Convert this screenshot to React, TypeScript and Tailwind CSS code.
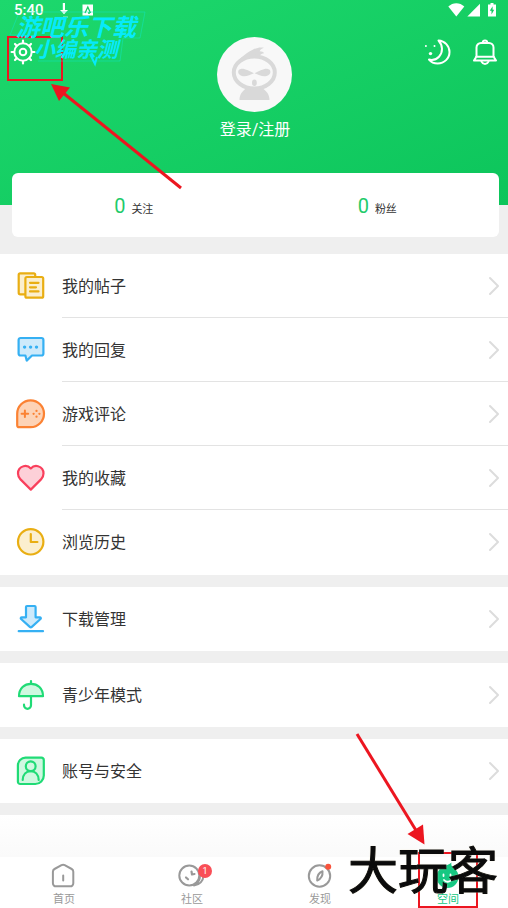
import type { ReactNode } from "react";

const stroke = {
  fill: "none",
  strokeLinecap: "round" as const,
  strokeLinejoin: "round" as const,
};

function RowIcon({ children, color, tint }: { children: ReactNode; color: string; tint: string }) {
  return (
    <svg viewBox="0 0 32 32" className="size-8 shrink-0" {...stroke} stroke={color} fill={tint} strokeWidth="2.200" aria-hidden="true">
      {children}
    </svg>
  );
}

function PostsIcon() {
  return (
    <RowIcon color="#e9ae13" tint="#fbefcf">
      <rect x="3.7" y="3.3" width="16.5" height="21" rx="1.5" />
      <rect x="10.4" y="7" width="17.8" height="20.7" rx="1.5" />
      <path d="M15 12.8h8.5M15 17.3h6M15 21.4h8.5" fill="none" />
    </RowIcon>
  );
}

function ReplyIcon() {
  return (
    <RowIcon color="#35b0f3" tint="#cdeafb">
      <path d="M5.6 4h20.8a2 2 0 0 1 2 2v13.5a2 2 0 0 1-2 2H17L11.7 26.6 10.4 21.5H5.6a2 2 0 0 1-2-2V6a2 2 0 0 1 2-2z" />
      <path d="M9.6 13.1h.01M15.6 13.1h.01M21.5 13.1h.01" strokeWidth="3.4" />
    </RowIcon>
  );
}

function GameIcon() {
  return (
    <RowIcon color="#fb8233" tint="#fdd3b6">
      <path d="M15.6 2.4A13.4 13.4 0 1 1 15.6 29.2H4.2a2 2 0 0 1-2-2V15.8A13.4 13.4 0 0 1 15.6 2.4z" />
      <path d="M6.6 15.8h6.6M9.9 12.5v6.6" strokeWidth="2" />
      <path d="M21.5 12.9h.01M21.5 18.7h.01M18.6 15.8h.01M24.4 15.8h.01" strokeWidth="2.3" />
    </RowIcon>
  );
}

function HeartIcon() {
  return (
    <RowIcon color="#f93f5c" tint="#fdd0d8">
      <path d="M15.8 6.4C18 4 20.6 3.6 23 4.2c3 .8 5.5 3.300 5.500 7.200 0 2.500-.9 4.300-2.500 6L15.8 27.600 5.500 17.400C3.900 15.700 3 13.900 3 11.400 3 7.500 5.500 5 8.500 4.200c2.400-.6 5.100-.2 7.300 2.200z" />
    </RowIcon>
  );
}

function ClockIcon() {
  return (
    <RowIcon color="#e9ae13" tint="#fbefcf">
      <circle cx="15.7" cy="15.8" r="12.700" />
      <path d="M15.800 8v8h6.600" fill="none" />
    </RowIcon>
  );
}

function DownloadIcon() {
  return (
    <RowIcon color="#35b0f3" tint="#cdeafb">
      <path d="M12 3h7.600a1 1 0 0 1 1 1v10.300h4.200c1 0 1.400 1 .7 1.700L16.800 23.900a1.500 1.500 0 0 1-2 0L6.100 16c-.7-.7-.3-1.700.7-1.700H11V4a1 1 0 0 1 1-1z" />
      <path d="M3.700 28.200h24.300" />
    </RowIcon>
  );
}

function UmbrellaIcon() {
  return (
    <RowIcon color="#20db76" tint="#cff8e0">
      <path d="M16 16v10.300a3.500 3.500 0 0 1-7 0v-.6M16 2v2" fill="none" />
      <path d="M4 17.200C4 9 9.500 4.800 16 4.800s12 4.200 12 12.400z" />
    </RowIcon>
  );
}

function AccountIcon() {
  return (
    <RowIcon color="#20db76" tint="#cff8e0">
      <path d="M10.500 2.700H26.500a2.300 2.300 0 0 1 2.300 2.300V20.500a8.500 8.500 0 0 1-8.500 8.500H5.200A2.300 2.300 0 0 1 2.900 26.700V10.500a7.700 7.700 0 0 1 7.600-7.800z" />
      <circle cx="15.700" cy="11.300" r="4.900" />
      <path d="M7.700 25c.2-5.500 3.500-8.800 8-8.800s7.800 3.300 8 8.800" fill="none" />
    </RowIcon>
  );
}

const groups: { label: string; icon: ReactNode }[][] = [
  [
    { label: "我的帖子", icon: <PostsIcon /> },
    { label: "我的回复", icon: <ReplyIcon /> },
    { label: "游戏评论", icon: <GameIcon /> },
    { label: "我的收藏", icon: <HeartIcon /> },
    { label: "浏览历史", icon: <ClockIcon /> },
  ],
  [{ label: "下载管理", icon: <DownloadIcon /> }],
  [{ label: "青少年模式", icon: <UmbrellaIcon /> }],
  [{ label: "账号与安全", icon: <AccountIcon /> }],
];

function StatusBar() {
  return (
    <div className="flex h-5 items-center justify-between pr-3 pl-[14px] text-white">
      <div className="flex items-center">
        <span className="w-11 text-[15px] leading-5 font-medium">5:40</span>
        <svg viewBox="0 0 12 16" className="h-4 w-3" fill="#fff" aria-hidden="true">
          <path d="M4.800 1h2.200v7h3L6 12.200 2 8h2.800z" />
          <path d="M5 14.500h5v1.200h-5z" opacity=".6" />
        </svg>
        <svg viewBox="0 0 12 12" className="ml-3 size-3" aria-hidden="true">
          <rect x=".5" y=".5" width="10.500" height="11" fill="#fff" />
          <path d="M3 9L5.800 3l2.700 6M6 9h2" fill="none" stroke="#14ce63" strokeWidth="1.300" />
        </svg>
      </div>
      <svg viewBox="0 0 48 16" className="h-4 w-12" fill="#fff" aria-hidden="true">
        <path d="M.3 4.600C4.800 0 11.800 0 16.300 4.600L8.300 14.500z" />
        <path d="M19.300 14.500L32 1.800v12.700z" />
        <path d="M42.500 1h3v1.400H48v12.100h-8V2.400h2.500z" />
        <path d="M44.600 4.200l-2.800 4.600h1.700v3.800l2.700-4.900h-1.600z" fill="#10cc61" />
      </svg>
    </div>
  );
}

function GearIcon() {
  return (
    <svg viewBox="0 0 26 26" className="size-[26px]" {...stroke} stroke="#fff" strokeWidth="2" aria-hidden="true">
      <circle cx="13" cy="13" r="8.700" />
      <circle cx="13" cy="13" r="3.300" />
      <path strokeWidth="2.200" d="M13 4V1.600M13 22v2.400M4 13H1.600M22 13h2.400M6.700 6.700L5 5M19.300 6.700L21 5M6.700 19.300L5 21M19.300 19.300L21 21" />
    </svg>
  );
}

function MoonIcon() {
  return (
    <svg viewBox="0 0 28 28" className="size-7" {...stroke} stroke="#fff" strokeWidth="2" aria-hidden="true">
      <path d="M14.500 2.500C20.800 2.900 25.500 7.800 25.500 14c0 6.400-5.200 11.500-11.800 11.500-3.700 0-6.800-1.500-8.700-3.900 3.700.8 7.500-.2 10-2.900 4.300-4.600 3.800-11.500-.5-16.200z" />
      <path d="M1.900 8.100h.01M10.500 8.100h.01" strokeWidth="2" />
      <path d="M6.500 15.600h.01" strokeWidth="3.400" />
    </svg>
  );
}

function BellIcon() {
  return (
    <svg viewBox="0 0 26 28" className="h-7 w-[26px]" {...stroke} stroke="#fff" strokeWidth="2" aria-hidden="true">
      <path d="M10.800 4.700a2.200 2.200 0 0 1 4.400 0" />
      <path d="M4.500 18.500V9.500a4.500 4.500 0 0 1 4.500-4.500h8a4.500 4.500 0 0 1 4.500 4.500v9M4 18.700h18M4.500 18.500L2 22.600h22l-2.500-4.100" />
      <path d="M9.500 23.600c.7 1.500 2 2.300 3.500 2.300s2.800-.8 3.500-2.300" />
    </svg>
  );
}

function Avatar() {
  return (
    <svg viewBox="0 0 75 75" className="size-[75px]" aria-hidden="true">
      <circle cx="37.500" cy="37.500" r="37.500" fill="#f8f8f8" />
      <path d="M20 25C24 20 31 15 37 12c4-1.600 7-2 10-1.200-2.500.8-4 2-4.300 3.400 2 0 4 .8 4.500 2-2 0-3.500 1-5.200 3z" fill="#d9d9d9" />
      <ellipse cx="37.300" cy="35.500" rx="20.500" ry="16" fill="#f8f8f8" stroke="#d9d9d9" strokeWidth="4" />
      <path d="M37 36.300C33 34.500 28 31.500 24.500 31.800c-4.500.5-4.500 6 .5 7.200 4 .8 8-.8 12-2.700zM37.600 36.300c4-1.800 9-4.800 12.500-4.500 4.500.5 4.500 6-.5 7.200-4 .8-8-.8-12-2.700z" fill="#d9d9d9" />
      <ellipse cx="37.400" cy="45.800" rx="2.400" ry="3.200" fill="#d9d9d9" />
      <path d="M22.500 63c0-5.500 3-9 6.800-11.700 5 1.800 11 1.800 16 0C49.500 54 52.500 57.500 52.500 63z" fill="#d9d9d9" />
    </svg>
  );
}

function Stat({ value, label }: { value: number; label: string }) {
  return (
    <button type="button" className="flex flex-1 items-baseline justify-center gap-[6px]">
      <span className="text-xl leading-6 text-[#1fcb6b]">{value}</span>
      <span className="text-[11px] leading-4 text-[#333]">{label}</span>
    </button>
  );
}

function Tab({ label, icon, active = false }: { label: string; icon: ReactNode; active?: boolean }) {
  return (
    <a href="#" aria-current={active ? "page" : undefined} className="flex flex-col items-center gap-[2px] pt-[5px]">
      {icon}
      <span className={active ? "text-[11px] leading-4 text-[#14c883]" : "text-[11px] leading-4 text-[#999]"}>{label}</span>
    </a>
  );
}

const tabIcon = "h-7 w-8 overflow-visible";

export default function App() {
  return (
    <div className="relative flex min-h-screen flex-col overflow-hidden bg-[#efefef] font-[Roboto,'Noto_Sans_CJK_SC',sans-serif]">
      <header className="relative bg-linear-to-br from-[#1dd86d] to-[#0cc55b] pb-[63px]">
        <StatusBar />
        <div className="grid grid-cols-3 items-start pr-2 pl-[10px]">
          <button type="button" aria-label="设置" className="mt-[19px] justify-self-start">
            <GearIcon />
          </button>
          <button type="button" className="mt-[17px] flex flex-col items-center gap-[6px] justify-self-center text-base leading-6 text-white">
            <Avatar />
            登录/注册
          </button>
          <div className="mt-[18px] flex items-center gap-5 justify-self-end pr-[2px]">
            <button type="button" aria-label="夜间模式">
              <MoonIcon />
            </button>
            <button type="button" aria-label="通知">
              <BellIcon />
            </button>
          </div>
        </div>

        <svg className="pointer-events-none absolute top-0 left-0 z-10 h-52 w-48" viewBox="0 0 192 208" fill="none" aria-hidden="true">
          <rect x="8" y="37" width="54" height="43" stroke="#ec1620" strokeWidth="2" />
          <path d="M181 188L62 92" stroke="#ec1620" strokeWidth="3" />
          <path d="M51 84l19 3.500L59 101z" fill="#ec1620" />
          <path d="M18 15l-8 20h7M28 12h117l-5 26H123l-3 23H38" stroke="#10e6c4" strokeWidth="1" opacity=".5" />
          <path d="M90 54l5 10 2-7" stroke="#06eafa" strokeWidth="2" />
        </svg>
        <div className="pointer-events-none absolute top-3 left-4 z-10 font-['Noto_Sans_CJK_SC',sans-serif] font-bold whitespace-nowrap text-[#06eafa] italic">
          <p className="text-2xl leading-7">游吧乐下载</p>
          <p className="-mt-1 pl-[18px] text-[21px] leading-6">小编亲测</p>
        </div>
      </header>

      <main className="flex flex-1 flex-col gap-3">
        <section className="relative mr-[9px] mb-[5px] ml-3 -mt-8 flex h-16 items-center rounded-md bg-white pt-[2px]">
          <Stat value={0} label="关注" />
          <Stat value={0} label="粉丝" />
        </section>
        {groups.map((rows) => (
          <ul key={rows[0].label} className="bg-white first-of-type:pb-px">
            {rows.map((row, i) => (
              <li key={row.label}>
                <button type="button" className="flex h-16 w-full items-center gap-[15px] pl-[15px] text-left">
                  {row.icon}
                  <span
                    className={
                      i < rows.length - 1
                        ? "flex h-full flex-1 items-center justify-between border-b border-[#e3e3e3] pr-[9px]"
                        : "flex h-full flex-1 items-center justify-between pr-[9px]"
                    }
                  >
                    <span className="pt-[2px] text-base text-[#333]">{row.label}</span>
                    <svg viewBox="0 0 10 20" className="h-5 w-[10px]" {...stroke} stroke="#dcdcdc" strokeWidth="2" aria-hidden="true">
                      <path d="M1 2l8 8-8 8" />
                    </svg>
                  </span>
                </button>
              </li>
            ))}
          </ul>
        ))}
        <div className="min-h-10 flex-1 bg-linear-to-b from-white to-[#fafafa]" />
      </main>

      <nav className="relative bg-white">
        <div className="-mr-1 grid h-[51px] grid-cols-4">
          <Tab
            label="首页"
            icon={
              <svg viewBox="0 0 32 28" className={tabIcon} {...stroke} stroke="#999" strokeWidth="2" aria-hidden="true">
                <path d="M13.500 3.200L6.500 7a3 3 0 0 0-1.600 2.700v11.600a3 3 0 0 0 3 3h14.400a3 3 0 0 0 3-3V9.700A3 3 0 0 0 23.700 7l-7-3.800a3.300 3.300 0 0 0-3.200 0zM15.200 13.500v5" />
              </svg>
            }
          />
          <Tab
            label="社区"
            icon={
              <span className="relative">
                <svg viewBox="0 0 32 28" className={tabIcon} {...stroke} stroke="#999" strokeWidth="2" aria-hidden="true">
                  <circle cx="13.300" cy="13.500" r="10" />
                  <path d="M27.500 13.500c-.2 5.500-4 9.700-9.500 9.900M24 13.500c0 4-2 7.500-5 9.500" />
                  <path d="M10 15.500l2 1.800M15.500 9.500l.5 3 2.500-.5" strokeWidth="2.200" />
                </svg>
                <span className="absolute top-[2px] -right-1 size-[14px] rounded-full bg-[#f94f57] text-center text-[9px] leading-[14px] text-white">1</span>
              </span>
            }
          />
          <Tab
            label="发现"
            icon={
              <svg viewBox="0 0 32 28" className={tabIcon} {...stroke} stroke="#999" strokeWidth="2" aria-hidden="true">
                <circle cx="15.500" cy="14" r="10.700" />
                <path d="M18.500 9.200c-3.500 1.200-5.500 3.800-5.300 9.300 3.800-1.500 5.800-4.300 5.300-9.300z" />
                <circle cx="24.200" cy="4.700" r="3" fill="#f9533c" stroke="none" />
              </svg>
            }
          />
          <Tab
            active
            label="空间"
            icon={
              <svg viewBox="0 0 32 28" className={tabIcon} aria-hidden="true">
                <circle cx="15.500" cy="15" r="11" fill="#15c882" />
                <path d="M11 6C13 3 16 3.500 19.500.500c-.5 2-.3 3 1.500 5z" fill="#15c882" />
                <path d="M11.500 12.500v1.500M18.500 12.500v1.500M12 18c2 2.500 5.500 2.300 7.500-.3" {...stroke} stroke="#fff" strokeWidth="1.800" />
              </svg>
            }
          />
        </div>
        <svg className="pointer-events-none absolute right-0 bottom-0 h-[180px] w-[168px]" viewBox="340 728 168 180" fill="none" aria-hidden="true">
          <rect x="419" y="853" width="58" height="54" stroke="#ec1620" strokeWidth="2" />
          <path d="M357 734L417 832" stroke="#ec1620" strokeWidth="3" />
          <path d="M424.500 844.500l-17-10.500 15.500-9.500z" fill="#ec1620" />
        </svg>
        <p className="pointer-events-none absolute right-[10px] bottom-4 font-['Noto_Sans_CJK_SC',sans-serif] text-[50px] leading-[50px] font-normal whitespace-nowrap text-[#0b0b0b] [text-shadow:0_0_2px_#efe6c4] [-webkit-text-stroke:1px_#0b0b0b]">
          大玩客
        </p>
      </nav>
    </div>
  );
}
